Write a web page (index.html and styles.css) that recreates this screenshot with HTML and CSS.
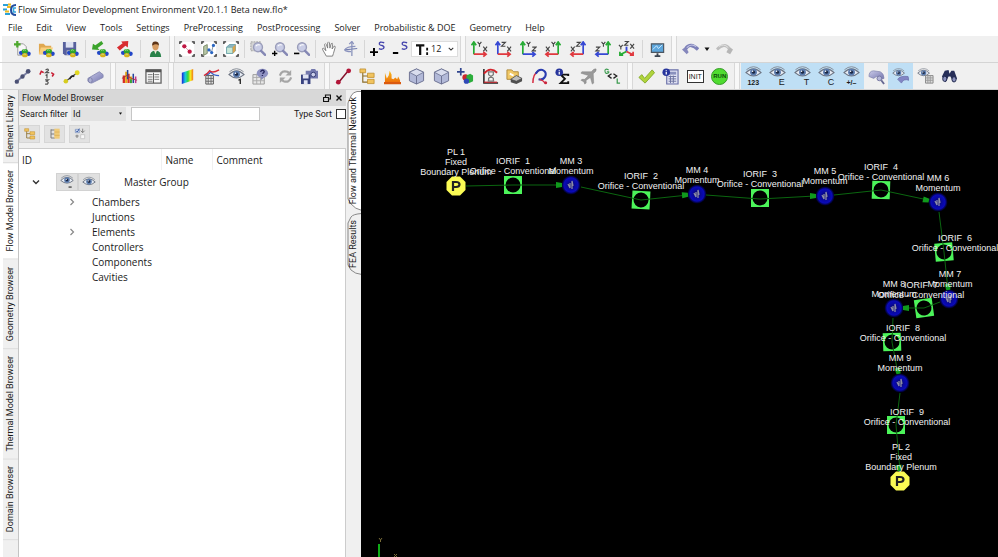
FILE: index.html
```html
<!DOCTYPE html>
<html lang="en">
<head>
<meta charset="utf-8">
<title>Flow Simulator Development Environment</title>
<link rel="stylesheet" href="styles.css">
</head>
<body>
<svg class="defs" aria-hidden="true">
  <defs>
    <linearGradient id="lilac" x1="0" y1="0" x2="1" y2="1"><stop offset="0" stop-color="#c9cae8"/><stop offset="1" stop-color="#7374ae"/></linearGradient>
    <linearGradient id="rainbow"><stop offset="0" stop-color="#1a20d8"/><stop offset=".3" stop-color="#18c8e0"/><stop offset=".55" stop-color="#38d838"/><stop offset=".75" stop-color="#f4ee20"/><stop offset="1" stop-color="#f07818"/></linearGradient>
    <linearGradient id="flame" x1="0" y1="0" x2="0" y2="1"><stop offset="0" stop-color="#f6c020"/><stop offset="1" stop-color="#ee6a08"/></linearGradient>
    <radialGradient id="orb"><stop offset="0" stop-color="#0a0a50"/><stop offset=".45" stop-color="#0808a0"/><stop offset=".75" stop-color="#0a0ab8"/><stop offset="1" stop-color="#000040" stop-opacity=".5"/></radialGradient>

    <g id="balls"><ellipse cx="8" cy="12.500" rx="2.800" ry="2.300" fill="#2246c8"/><ellipse cx="15" cy="13.500" rx="2.800" ry="2.300" fill="#2246c8"/><ellipse cx="11.500" cy="11" rx="3.300" ry="2.500" fill="#2fa52c"/><ellipse cx="11.500" cy="15" rx="3" ry="2.200" fill="#d8b21c"/><path d="M9.500 10q2-1.300 3 0M10 14.500q1.500-1 2.500 0" stroke="#b7f2a0" fill="none" stroke-width=".8"/></g>
    <g id="eye"><path d="M1 7Q9-1 17 7Q9 14 1 7Z" fill="#e8edf5" stroke="#6d7482" stroke-width="1.200"/><circle cx="9" cy="6.500" r="3.600" fill="#5c7cae"/><circle cx="9" cy="6.500" r="1.700" fill="#1c2844"/><circle cx="8" cy="5.500" r=".8" fill="#fff"/><path d="M1.500 4Q9-2.500 16.500 4" fill="none" stroke="#858b96"/></g>
    <g id="lens"><circle cx="9" cy="7" r="5" fill="#c9cde6" stroke="#9a9dba" stroke-width="1.600"/><path d="M6.500 6Q8 3.500 11 4.500" fill="none" stroke="#fff" stroke-width="1.200"/><path d="M12.500 11L17 15.500" stroke="#8588b4" stroke-width="2.800" stroke-linecap="round"/></g>
    <g id="corners" fill="none" stroke="#333" stroke-width="1.500"><path d="M1 3.500V1H3.500M14.500 1H17V3.500M17 14.500V17H14.500M3.500 17H1V14.500"/></g>
    <g id="cube"><path d="M9 1L16.500 4.500V13.500L9 17L1.500 13.500V4.500Z" fill="#b2b9d8" stroke="#6a7090"/><path d="M9 1L16.500 4.500L9 8.500L1.500 4.500Z" fill="#d9ddee" stroke="#656c8c" stroke-width=".8"/><path d="M9 8.500V17" stroke="#6a7090"/></g>
    <g id="tree"><path d="M4 4V15H10M4 8.500H10" fill="none" stroke="#8a6c28" stroke-width="1.200"/><path d="M1 1H7V5H1ZM9 5.500H16V10H9ZM9 12H16V16.500H9Z" fill="#f1c35e" stroke="#be8d2c" stroke-width=".8"/></g>
    <g id="info"><circle cx="4.500" cy="4.500" r="4" fill="#27359c"/><path d="M4.500 4V7M4.500 2V3" stroke="#fff" stroke-width="1.300"/></g>

    <symbol id="i-new" viewBox="0 0 18 18"><path d="M4 3H10L13 6V15H4Z" fill="#f7f7f7" stroke="#999"/><path d="M3.500 0V7M0 3.500H7" stroke="#4da82c" stroke-width="2.400"/><use href="#balls"/></symbol>
    <symbol id="i-open" viewBox="0 0 18 18"><path d="M1 3H6L8 5H14V14H1Z" fill="#e0a850"/><path d="M3 7H16L13 14H1Z" fill="#f9cf7c"/><use href="#balls"/></symbol>
    <symbol id="i-save" viewBox="0 0 18 18"><path d="M1 1H15V15H3L1 13Z" fill="#57609d"/><path d="M4 1H12V7H4Z" fill="#dde1f1"/><path d="M5 10H11V15H5Z" fill="#ccc"/><use href="#balls"/></symbol>
    <symbol id="i-import" viewBox="0 0 18 18"><path d="M0 9L1 3L3.500 4.500L10 0L12 3L6 7.500L8 9.500Z" fill="#3ca42c"/><use href="#balls"/></symbol>
    <symbol id="i-export" viewBox="0 0 18 18"><path d="M13 0L12.500 7L10 5L4 10L1 7L7 2.500L5.500 .5Z" fill="#d82d30"/><use href="#balls"/></symbol>
    <symbol id="i-user" viewBox="0 0 18 18"><path d="M3 17Q3 10 9 10Q15 10 15 17Z" fill="#29824a"/><path d="M7 9L9 14L11 9Z" fill="#f0e7d8"/><ellipse cx="9" cy="5.500" rx="3.300" ry="4.300" fill="#d69c62"/><path d="M5.500 5Q5 0 9.500 .5Q13 1 12.500 5Q10 2 5.500 5Z" fill="#5c3418"/></symbol>
    <symbol id="i-fit-nodes" viewBox="0 0 18 18"><path d="M1 1H17V17H1Z" fill="#fff"/><use href="#corners"/><path d="M6 6L12 12" stroke="#d89aa8"/><circle cx="6" cy="6" r="2.400" fill="#c01844"/><circle cx="12" cy="12" r="2.400" fill="#c01844"/></symbol>
    <symbol id="i-fit-parts" viewBox="0 0 18 18"><path d="M1 1H17V17H1Z" fill="#fff"/><use href="#corners"/><path d="M3 6L7 4V14L3 16Z" fill="#b9c8a8" stroke="#758561"/><path d="M9 10L12 12L14 4" fill="none" stroke="#789" stroke-width="1"/><circle cx="9" cy="10" r="1.800" fill="#2a66c2"/><circle cx="12" cy="13" r="1.800" fill="#2a66c2"/><circle cx="14" cy="5" r="1.800" fill="#2a66c2"/></symbol>
    <symbol id="i-fit-cube" viewBox="0 0 18 18"><path d="M1 1H17V17H1Z" fill="#fff"/><use href="#corners"/><path d="M4 7L7 4H14V11L11 14H4Z" fill="#8fb6c4" stroke="#68a0a8"/><path d="M4 7H11V14H4Z" fill="#c8e8d8" stroke="#68a0a8" stroke-width=".8"/><path d="M11 7L14 4V11L11 14Z" fill="#dba34b"/></symbol>
    <symbol id="i-zoom-box" viewBox="0 0 18 18"><path d="M1 1H12V11H1Z" fill="#d4d4d4" stroke="#999" stroke-dasharray="2 1"/><use href="#lens"/></symbol>
    <symbol id="i-zoom-in" viewBox="0 0 18 18"><use href="#lens"/><path d="M3 11V17M0 14H6" stroke="#000" stroke-width="1.600"/></symbol>
    <symbol id="i-zoom-out" viewBox="0 0 18 18"><use href="#lens"/><path d="M0 14H6" stroke="#000" stroke-width="1.800"/></symbol>
    <symbol id="i-hand" viewBox="0 0 18 18"><path d="M6 17L2 10Q1 8 3 8L5.500 11L4 4Q5 2 6 4L7.500 8L7.500 2Q8.500 0 9.500 2L10 8L11.500 3Q13 1.500 13 4L12.500 9L14.500 6Q16 5 16 7L14 14L13 17Z" fill="#fff" stroke="#777"/></symbol>
    <symbol id="i-rotate" viewBox="0 0 18 18"><path d="M10 1V17M2 10L16 8.500" stroke="#7580b0" stroke-width="1.200"/><path d="M14 6Q4 6 2 10Q3 12 9 12M7 3.500L10 .5L12 3.500" fill="none" stroke="#8a92bd" stroke-width="1.400"/></symbol>
    <symbol id="i-size-up" viewBox="0 0 18 18"><path d="M4.500 8V17M0 12.500H9" stroke="#000" stroke-width="2.200"/><path d="M16 2Q10 0 10.500 3.500Q11 5 13.500 5Q17 6 15 8.500Q13 10 10 8.500" fill="none" stroke="#4545ad" stroke-width="1.600"/></symbol>
    <symbol id="i-size-down" viewBox="0 0 18 18"><path d="M1 13.500H7" stroke="#000" stroke-width="2.200"/><path d="M17 2Q11 0 11.500 3.500Q12 5 14.500 5Q18 6 16 8.500Q14 10 11 8.500" fill="none" stroke="#4545ad" stroke-width="1.600"/></symbol>
    <symbol id="i-text" viewBox="0 0 14 14"><path d="M0 2.500H9M4.500 2.500V13" stroke="#111" stroke-width="2.400"/><path d="M12 5V8M12 10V13" stroke="#111" stroke-width="2"/></symbol>

    <g id="frame-right"><path d="M3 14V2M.500 4.500L3 1L5.500 4.500" fill="none" stroke="currentColor" stroke-width="1.800"/></g>
    <g id="letter-x"><path d="M0 0L4 5M4 0L0 5" stroke="#444" stroke-width="1.200"/></g>
    <g id="letter-y"><path d="M0 0L2 2.500L4 0M2 2.500V5" stroke="#444" stroke-width="1.200" fill="none"/></g>
    <g id="letter-z"><path d="M0 .5H4L0 4.500H4" stroke="#444" stroke-width="1.200" fill="none"/></g>
    <g id="arrow-e"><path d="M3 14H15M13 11.500L16 14L13 16.500" fill="none" stroke="currentColor" stroke-width="1.800"/></g>
    <g id="frame-left"><path d="M15 14V2M12.500 4.500L15 1L17.500 4.500" fill="none" stroke="currentColor" stroke-width="1.800"/></g>
    <g id="arrow-w"><path d="M15 14H3M5 11.500L2 14L5 16.500" fill="none" stroke="currentColor" stroke-width="1.800"/></g>
    <symbol id="i-yx" viewBox="0 0 18 18"><use href="#frame-right" color="#26ab35"/><use href="#arrow-e" color="#e0383e"/><use href="#letter-y" x="7" y="1"/><use href="#letter-x" x="13" y="6"/></symbol>
    <symbol id="i-zx" viewBox="0 0 18 18"><use href="#frame-right" color="#3648d4"/><use href="#arrow-e" color="#e0383e"/><use href="#letter-z" x="7" y="1"/><use href="#letter-x" x="13" y="6"/></symbol>
    <symbol id="i-yz" viewBox="0 0 18 18"><use href="#frame-right" color="#26ab35"/><use href="#arrow-e" color="#3648d4"/><use href="#letter-y" x="7" y="1"/><use href="#letter-z" x="13" y="6"/></symbol>
    <symbol id="i-xy" viewBox="0 0 18 18"><use href="#frame-left" color="#26ab35"/><use href="#arrow-w" color="#e0383e"/><use href="#letter-y" x="8" y="1"/><use href="#letter-x" x="2" y="6"/></symbol>
    <symbol id="i-xz" viewBox="0 0 18 18"><use href="#frame-left" color="#3648d4"/><use href="#arrow-w" color="#e0383e"/><use href="#letter-z" x="8" y="1"/><use href="#letter-x" x="2" y="6"/></symbol>
    <symbol id="i-zy" viewBox="0 0 18 18"><use href="#frame-left" color="#26ab35"/><use href="#arrow-w" color="#3648d4"/><use href="#letter-y" x="8" y="1"/><use href="#letter-z" x="2" y="6"/></symbol>
    <symbol id="i-iso" viewBox="0 0 18 18"><path d="M9 11V6" stroke="#3648d4" stroke-width="2"/><path d="M9 11L2 14.500M2 11.500V15H5.500" stroke="#26ab35" stroke-width="1.800" fill="none"/><path d="M9 11L16 14.500M16 11.500V15H12.500" stroke="#e0383e" stroke-width="1.800" fill="none"/><use href="#letter-y" x="1" y="4"/><use href="#letter-z" x="7" y="0"/><use href="#letter-x" x="13" y="3"/></symbol>
    <symbol id="i-monitor" viewBox="0 0 18 18"><path d="M2.500 3H15.500V12H2.500Z" fill="#5ca6dc" stroke="#4b5560" stroke-width="1.200"/><path d="M4 9L8 5L10 8L14 4" stroke="#cdeaff" fill="none"/><path d="M9 13V15M6 16H12" stroke="#3b4450" stroke-width="2"/></symbol>
    <symbol id="i-undo" viewBox="0 0 18 18"><path d="M0 9L4 6L7 12L5 14Z" fill="#8587bc"/><path d="M4 8Q9 1 17 9" fill="none" stroke="#7d80b8" stroke-width="3.500"/><path d="M5 7Q10 2 15 6" fill="none" stroke="#c5c7e6" stroke-width="1.200"/></symbol>
    <symbol id="i-redo" viewBox="0 0 18 18"><path d="M18 9L14 6L11 12L15 14Z" fill="#b6b6b6"/><path d="M14 8Q9 1 1 9" fill="none" stroke="#bdbdbd" stroke-width="3"/><path d="M13 7Q8 2 3 6" fill="none" stroke="#e6e6e6"/></symbol>
    <symbol id="i-caret" viewBox="0 0 8 8"><path d="M1.500 2.500H6.500L4 6Z" fill="#111"/></symbol>

    <symbol id="i-chain" viewBox="0 0 18 18"><path d="M3 14L9 9L15 4" stroke="#7c81a4" stroke-width="2"/><g fill="#4b5174"><circle cx="3" cy="14.500" r="2.300"/><circle cx="9" cy="9" r="2.300"/><circle cx="15" cy="3.500" r="2.500"/></g></symbol>
    <symbol id="i-renumber" viewBox="0 0 18 18"><g fill="none" stroke="#555" stroke-width="1.300"><path d="M8 2Q11 0 11 2.500L8 5H12M8 8L9.500 7V11M7.500 12.500H11L9 14Q12 15 10 17H7.500"/></g><path d="M2 7L3.500 3.500L6 5M14 5L16.500 6.500L15 9" stroke="#c81c32" stroke-width="1.600" fill="none"/></symbol>
    <symbol id="i-link" viewBox="0 0 18 18"><path d="M3 14L15 5" stroke="#444" stroke-width="1.200"/><circle cx="3" cy="14" r="2.400" fill="#d6cc20"/><circle cx="15" cy="5" r="2.600" fill="#e2d820"/><path d="M7 12Q9 7 12 9" stroke="#222" stroke-width="1.600" fill="none"/></symbol>
    <symbol id="i-pipe" viewBox="0 0 18 18"><path d="M1 11L13 4L17 7V10L5 16L1 14Z" fill="url(#lilac)" stroke="#888bb5"/><ellipse cx="3.500" cy="13" rx="2" ry="2.800" fill="#aeb1d4" stroke="#7d80a9"/></symbol>
    <symbol id="i-bars" viewBox="0 0 18 18"><path d="M3 16V8M8 16V6" stroke="#d82c25" stroke-width="2.400"/><path d="M5.500 16V4M10.500 16V9" stroke="#e8a818" stroke-width="2.200"/><path d="M7 12V2M13 16V6" stroke="#24439c" stroke-width="1.600"/><path d="M1 11L6 8L11 11L17 13" stroke="#a33" fill="none"/><path d="M10.500 16V12" stroke="#32a43b" stroke-width="2"/><path d="M15.500 16V9" stroke="#c2378a" stroke-width="1.600"/></symbol>
    <symbol id="i-sheet" viewBox="0 0 18 18"><path d="M1 2H17V16H1Z" fill="#f7f7f7" stroke="#666" stroke-width="1.400"/><path d="M1 3H17" stroke="#555" stroke-width="3"/><path d="M3 7H8M3 9.500H8M3 12H8M3 14H8M10 7H15M10 9.500H15M10 12H15" stroke="#777"/><path d="M9 5V16" stroke="#555"/></symbol>
    <symbol id="i-contour" viewBox="0 0 18 18"><path d="M3 5L15 1V13L3 17Z" fill="url(#rainbow)"/></symbol>
    <symbol id="i-plot" viewBox="0 0 18 18"><path d="M3 6Q6 8 8 4Q11 8 17 8" fill="none" stroke="#345bc6" stroke-width="1.300"/><path d="M1 8Q5 6 7 3Q10 6 17 2" fill="none" stroke="#d62836" stroke-width="1.600"/><path d="M3 8H11V17H3Z" fill="#eee" stroke="#555"/><path d="M3 11H11M3 14H11M5.500 8V17M8.500 8V17" stroke="#666"/></symbol>
    <symbol id="i-eye-one" viewBox="0 0 18 18"><use href="#eye"/><path d="M11 13L13 12V17" fill="none" stroke="#222" stroke-width="1.400"/></symbol>
    <symbol id="i-query" viewBox="0 0 18 18"><path d="M1 7H13V17H1Z" fill="#e8e8e8" stroke="#999"/><path d="M1 10H13M1 13.500H13M5 7V17M9 7V17" stroke="#aaa"/><path d="M9 8H14L10 13Z" fill="#8385ae"/><ellipse cx="11" cy="5.500" rx="6" ry="4.800" fill="#8f92c2"/><path d="M9 4Q11 1 13 3.500Q13 5 11 6M11 7.500V8.500" stroke="#27275e" stroke-width="1.400" fill="none"/></symbol>
    <symbol id="i-refresh" viewBox="0 0 18 18"><path d="M3 8Q5 2 11 4L14 6M15 10Q13 16 7 14L4 12" fill="none" stroke="#a6a6a6" stroke-width="2.300"/><path d="M15 2V8H9ZM3 16V10H9Z" fill="#a6a6a6"/></symbol>
    <symbol id="i-save-view" viewBox="0 0 18 18"><path d="M5 3H10L11 1H15L16 3H18V11H5Z" fill="#7479ae"/><circle cx="13" cy="7" r="2.500" fill="#ccd0ea" stroke="#343b72"/><path d="M0 7H10V17H0Z" fill="#38427f"/><path d="M2 7H8V11H2ZM3 13H7V17H3Z" fill="#e1e4f3"/></symbol>
    <symbol id="i-line" viewBox="0 0 18 18"><path d="M4 15L14 3" stroke="#85112c" stroke-width="1.600"/><circle cx="3.500" cy="15" r="2.500" fill="#b21638"/><circle cx="14.500" cy="3" r="2.500" fill="#b21638"/></symbol>
    <symbol id="i-tree" viewBox="0 0 18 18"><use href="#tree"/></symbol>
    <symbol id="i-flame" viewBox="0 0 18 18"><path d="M1 16V5L3 11L5 8L6 3L8 7V11L10 12L12 10L14 12L15 9L17 13V16Z" fill="url(#flame)"/><path d="M0 16H18" stroke="#da5a10" stroke-width="2.400"/></symbol>
    <symbol id="i-cube" viewBox="0 0 18 18"><use href="#cube"/></symbol>
    <symbol id="i-shapes" viewBox="0 0 18 18"><path d="M4 0V8M0 4H8" stroke="#30458f" stroke-width="1.800"/><circle cx="9" cy="10" r="3.300" fill="#c9282d"/><path d="M10 8L14 6L17 8V14L13 16L10 14Z" fill="#2cae3c"/><circle cx="10" cy="14" r="2.800" fill="#3049b7"/></symbol>
    <symbol id="i-transient" viewBox="0 0 18 18"><path d="M2 1V16H17" fill="none" stroke="#222" stroke-width="1.600"/><path d="M2 6Q9-2 16 5" fill="none" stroke="#d3242c" stroke-width="2"/><path d="M2 15H16" stroke="#d3242c" stroke-width="1.200"/><path d="M6 4H13M6 14H13M7 4V7L12 11V14M12 4V7L7 11V14" fill="none" stroke="#777" stroke-width="1.300"/></symbol>
    <symbol id="i-database" viewBox="0 0 18 18"><path d="M1 2H6L8 4H13V12H1Z" fill="#f0c866" stroke="#b08938"/><path d="M4 6L8 8" stroke="#fff" stroke-width="2"/><path d="M5 12L11 8L17 11V14L11 17L5 15Z" fill="#505050"/><path d="M5 12L11 8L17 11L11 14Z" fill="#bdbdbd" stroke="#444" stroke-width=".7"/></symbol>
    <symbol id="i-curve" viewBox="0 0 18 18"><path d="M2 16Q2 6 8 3" fill="none" stroke="#d52c42" stroke-width="1.600"/><path d="M5 6Q8 1 12 2Q17 4 15 9Q13 13 8 12" fill="none" stroke="#2a3cb0" stroke-width="2.200"/><path d="M9 12Q13 13 15 16" fill="none" stroke="#d52c42" stroke-width="1.400"/><circle cx="15.500" cy="15.500" r="1.600" fill="#c9253c"/></symbol>
    <symbol id="i-sum" viewBox="0 0 18 18"><path d="M14 8.500V7H6L10.500 11.500L6 16H14V14" fill="none" stroke="#111" stroke-width="2"/><use href="#info"/></symbol>
    <symbol id="i-plane" viewBox="0 0 18 18"><path d="M17 1Q15 0 12 4L2 4L1 5.500L9 8L5 12L2 12L1 13L4 14.500L5 17L6.500 16V13L11 10L13 17L14.500 16L14 6Q18 3 17 1Z" fill="#999" stroke="#808080" stroke-width=".5"/></symbol>
    <symbol id="i-gl" viewBox="0 0 18 18"><path d="M5 2Q1 0 1 3Q1 7 5 5V4H3" fill="none" stroke="#3b9a4e" stroke-width="1.200"/><path d="M8 6L4.500 8.500L8 11M10 6L13.500 8.500L10 11" fill="none" stroke="#222" stroke-width="1.400"/><path d="M14 11V16H17" fill="none" stroke="#3b9a4e" stroke-width="1.300"/></symbol>
    <symbol id="i-check" viewBox="0 0 18 18"><path d="M1 10L4 7L7 11L15 2L17.500 5L7.500 16Z" fill="#b0d43c" stroke="#85aa28"/></symbol>
    <symbol id="i-calc" viewBox="0 0 18 18"><path d="M5 2H17V17H5Z" fill="#dfe1f2" stroke="#6a70a8" stroke-width="1.200"/><path d="M7 4H15V7H7Z" fill="#8a91bd"/><path d="M7 9H15M7 11.500H15M7 14H15M9 8V16M12 8V16" stroke="#6c739f"/><use href="#info"/></symbol>
    <symbol id="i-surface" viewBox="0 0 18 18"><path d="M1 9Q1 3 6 3L13 4Q17 6 17 11L14 12L9 9L6 11Z" fill="url(#lilac)" stroke="#8184ad" stroke-width=".7"/><circle cx="12" cy="11" r="2.500" fill="#b5b7d9" stroke="#73759f"/><path d="M14 13L17 17" stroke="#666892" stroke-width="2"/></symbol>
    <symbol id="i-eye-surface" viewBox="0 0 18 18"><svg width="14" height="14" viewBox="0 0 18 18"><use href="#eye"/></svg><path d="M6 12Q8 8 17 9L18 13Q12 11 10 16Z" fill="#8285c4" stroke="#696ca8" stroke-width=".7"/></symbol>
    <symbol id="i-eye-grid" viewBox="0 0 18 18"><svg width="14" height="14" viewBox="0 0 18 18"><use href="#eye"/></svg><path d="M9 8H17V16H9Z" fill="#ddd" stroke="#888"/><path d="M9 10.500H17M9 13H17M11.500 8V16M14 8V16" stroke="#999"/></symbol>
    <symbol id="i-binoculars" viewBox="0 0 18 18"><path d="M1 9L4 3L8 2L9 6L11 3L14 3L17 11L13 15L10 9L8 9L5 15Z" fill="#262e58"/><ellipse cx="4" cy="11.500" rx="2.200" ry="2.800" fill="#8b91bd" stroke="#20284c"/><ellipse cx="13.800" cy="12" rx="2.200" ry="2.800" fill="#8b91bd" stroke="#20284c"/></symbol>
    <symbol id="i-eye" viewBox="0 -2 18 18"><use href="#eye"/></symbol>
    <symbol id="i-eye-top" viewBox="0 0 18 18"><use href="#eye"/></symbol>
    <symbol id="i-eye-minus" viewBox="0 0 18 18"><use href="#eye"/><path d="M11 15.500H15" stroke="#222" stroke-width="1.400"/></symbol>
    <symbol id="i-list" viewBox="0 0 18 18"><path d="M3 2V15M3 3H9M3 15H9M3 9H9" stroke="#777" fill="none" stroke-width="1.400"/><path d="M8 1H16V16H8Z" fill="#f0cb78"/><path d="M8 6H16M8 11H16" stroke="#d9a94a"/></symbol>
    <symbol id="i-checks" viewBox="0 0 18 18"><path d="M2 2H8V7H2Z" fill="#dfe7f5" stroke="#6f88b8"/><path d="M3 4L5 6L8 1" stroke="#2950a0" stroke-width="1.400" fill="none"/><path d="M13 1V7M10 4L13 7L16 4M2 12H7M4.500 10V15" stroke="#777" stroke-width="1.300" fill="none"/><path d="M10 10H16V16H10Z" fill="#f8f8f8" stroke="#bbb"/></symbol>
    <symbol id="i-logo" viewBox="0 0 14 14"><path d="M0 2H5M0 6.500H4M2 11H7" stroke="#2ba1d8" stroke-width="2"/><path d="M4 4H8M2 8.500H6M5 1.500H8" stroke="#eebc22" stroke-width="1.800"/><path d="M13 2Q8 2 8 7Q8 12 13 12" fill="none" stroke="#234ea0" stroke-width="2"/><path d="M13 5H10.500V9H13" fill="none" stroke="#35a5dc" stroke-width="1.600"/></symbol>
    <symbol id="i-open-chevron" viewBox="0 0 8 8"><path d="M1 2.500L4 5.500L7 2.500" fill="none" stroke="#333" stroke-width="1.400"/></symbol>
    <symbol id="i-closed-chevron" viewBox="0 0 8 8"><path d="M2.500 1L5.500 4L2.500 7" fill="none" stroke="#888" stroke-width="1.200"/></symbol>
    <symbol id="i-float" viewBox="0 0 8 8"><path d="M2.500 3V1H7.500V5H5.500M.5 3.500H5.500V7.500H.5Z" fill="none" stroke="#111" stroke-width="1.200"/></symbol>
    <symbol id="i-close" viewBox="0 0 8 8"><path d="M1.500 1.500L6.500 6.500M6.500 1.500L1.500 6.500" stroke="#111" stroke-width="1.400"/></symbol>
  </defs>
</svg>

<header class="titlebar"><svg class="logo"><use href="#i-logo"/></svg><h1>Flow Simulator Development Environment V20.1.1 Beta new.flo*</h1></header>

<nav class="menubar" aria-label="Main menu">
  <button>File</button><button>Edit</button><button>View</button><button>Tools</button><button>Settings</button><button>PreProcessing</button><button>PostProcessing</button><button>Solver</button><button>Probabilistic &amp; DOE</button><button>Geometry</button><button>Help</button>
</nav>

<div class="toolrow">
  <div class="toolbar" role="toolbar" aria-label="File">
    <div class="group n3"><button aria-label="New"><svg><use href="#i-new"/></svg></button><button aria-label="Open"><svg><use href="#i-open"/></svg></button><button aria-label="Save"><svg><use href="#i-save"/></svg></button></div>
    <div class="group n2 divided"><button aria-label="Import"><svg><use href="#i-import"/></svg></button><button aria-label="Export"><svg><use href="#i-export"/></svg></button></div>
    <div class="group n1 divided"><button aria-label="User"><svg><use href="#i-user"/></svg></button></div>
  </div>
  <div class="toolbar tight" role="toolbar" aria-label="Navigation">
    <div class="group n3"><button aria-label="Fit nodes"><svg><use href="#i-fit-nodes"/></svg></button><button aria-label="Fit parts"><svg><use href="#i-fit-parts"/></svg></button><button aria-label="Fit geometry"><svg><use href="#i-fit-cube"/></svg></button></div>
    <div class="group n3 divided"><button aria-label="Zoom to box"><svg><use href="#i-zoom-box"/></svg></button><button aria-label="Zoom in"><svg><use href="#i-zoom-in"/></svg></button><button aria-label="Zoom out"><svg><use href="#i-zoom-out"/></svg></button></div>
    <div class="group n2 divided"><button aria-label="Pan"><svg><use href="#i-hand"/></svg></button><button aria-label="Rotate"><svg><use href="#i-rotate"/></svg></button></div>
    <div class="group n2 divided"><button aria-label="Larger symbols"><svg><use href="#i-size-up"/></svg></button><button aria-label="Smaller symbols"><svg><use href="#i-size-down"/></svg></button></div>
    <label class="fontsize"><svg class="t"><use href="#i-text"/></svg><select aria-label="Text size"><option>12</option></select><svg class="chev"><use href="#i-open-chevron"/></svg></label>
  </div>
  <div class="toolbar" role="toolbar" aria-label="Views">
    <div class="group n7"><button aria-label="Y X view"><svg><use href="#i-yx"/></svg></button><button aria-label="Z X view"><svg><use href="#i-zx"/></svg></button><button aria-label="Y Z view"><svg><use href="#i-yz"/></svg></button><button aria-label="X Y view"><svg><use href="#i-xy"/></svg></button><button aria-label="X Z view"><svg><use href="#i-xz"/></svg></button><button aria-label="Z Y view"><svg><use href="#i-zy"/></svg></button><button aria-label="Isometric view"><svg><use href="#i-iso"/></svg></button></div>
    <div class="group n1 divided"><button aria-label="Display"><svg><use href="#i-monitor"/></svg></button></div>
  </div>
  <div class="toolbar" role="toolbar" aria-label="History">
    <div class="group n1"><button aria-label="Undo"><svg><use href="#i-undo"/></svg></button></div>
    <button class="caret" aria-label="Undo list"><svg><use href="#i-caret"/></svg></button>
    <div class="group n1"><button aria-label="Redo"><svg><use href="#i-redo"/></svg></button></div>
  </div>
</div>

<div class="toolrow">
  <div class="toolbar" role="toolbar" aria-label="Network"><div class="group n4"><button aria-label="Chain"><svg><use href="#i-chain"/></svg></button><button aria-label="Renumber"><svg><use href="#i-renumber"/></svg></button><button aria-label="Link"><svg><use href="#i-link"/></svg></button><button aria-label="Pipe"><svg><use href="#i-pipe"/></svg></button></div></div>
  <div class="toolbar" role="toolbar" aria-label="Tables"><div class="group n2"><button aria-label="Charts"><svg><use href="#i-bars"/></svg></button><button aria-label="Table"><svg><use href="#i-sheet"/></svg></button></div></div>
  <div class="toolbar" role="toolbar" aria-label="Results"><div class="group n6"><button aria-label="Contours"><svg><use href="#i-contour"/></svg></button><button aria-label="Plot"><svg><use href="#i-plot"/></svg></button><button aria-label="Show result"><svg><use href="#i-eye-one"/></svg></button><button aria-label="Query"><svg><use href="#i-query"/></svg></button><button aria-label="Refresh"><svg><use href="#i-refresh"/></svg></button><button aria-label="Save view"><svg><use href="#i-save-view"/></svg></button></div></div>
  <div class="toolbar" role="toolbar" aria-label="Model"><div class="group n12"><button aria-label="Line"><svg><use href="#i-line"/></svg></button><button aria-label="Tree"><svg><use href="#i-tree"/></svg></button><button aria-label="Combustion"><svg><use href="#i-flame"/></svg></button><button aria-label="Solid"><svg><use href="#i-cube"/></svg></button><button aria-label="Volume"><svg><use href="#i-cube"/></svg></button><button aria-label="Add shapes"><svg><use href="#i-shapes"/></svg></button><button aria-label="Transient"><svg><use href="#i-transient"/></svg></button><button aria-label="Database"><svg><use href="#i-database"/></svg></button><button aria-label="Curve"><svg><use href="#i-curve"/></svg></button><button aria-label="Sum"><svg><use href="#i-sum"/></svg></button><button aria-label="Mission"><svg><use href="#i-plane"/></svg></button><button aria-label="Global to local"><svg><use href="#i-gl"/></svg></button></div></div>
  <div class="toolbar" role="toolbar" aria-label="Run"><div class="group n4"><button aria-label="Check"><svg><use href="#i-check"/></svg></button><button aria-label="Calculator"><svg><use href="#i-calc"/></svg></button><button><span class="init">INIT</span></button><button><span class="run">RUN</span></button></div></div>
  <div class="toolbar" role="toolbar" aria-label="Visibility"><div class="group n9"><button class="on eye"><svg><use href="#i-eye-top"/></svg><span>123</span></button><button class="on eye letter"><svg><use href="#i-eye-top"/></svg><span>E</span></button><button class="on eye letter"><svg><use href="#i-eye-top"/></svg><span>T</span></button><button class="on eye letter"><svg><use href="#i-eye-top"/></svg><span>C</span></button><button class="on eye"><svg><use href="#i-eye-top"/></svg><span>+/&#8211;</span></button><button aria-label="Pick surface"><svg><use href="#i-surface"/></svg></button><button class="on" aria-label="Show surface"><svg><use href="#i-eye-surface"/></svg></button><button aria-label="Show grid"><svg><use href="#i-eye-grid"/></svg></button><button aria-label="Find"><svg><use href="#i-binoculars"/></svg></button></div></div>
</div>

<main class="workspace">
  <nav class="sidetabs" aria-label="Browsers">
    <button>Element Library</button><button class="active">Flow Model Browser</button><button>Geometry Browser</button><button>Thermal Model Browser</button><button>Domain Browser</button>
  </nav>
  <section class="dock">
    <header class="docktitle"><h2>Flow Model Browser</h2><button aria-label="Float"><svg><use href="#i-float"/></svg></button><button aria-label="Close"><svg><use href="#i-close"/></svg></button></header>
    <div class="filter">
      <label for="field">Search filter</label>
      <span class="pick"><select id="field"><option>Id</option></select><svg><use href="#i-caret"/></svg></span>
      <input type="text" aria-label="Search text">
      <label class="sort">Type Sort <input type="checkbox"></label>
    </div>
    <div class="treetools"><button aria-label="Expand tree"><svg><use href="#i-tree"/></svg></button><button aria-label="Collapse tree"><svg><use href="#i-list"/></svg></button><button aria-label="Select items"><svg><use href="#i-checks"/></svg></button></div>
    <div class="treebox">
      <table>
        <thead><tr><th class="c-id">ID</th><th class="c-name">Name</th><th>Comment</th></tr></thead>
        <tbody>
          <tr class="master"><td colspan="3"><div><button class="twist" aria-label="Collapse"><svg><use href="#i-open-chevron"/></svg></button><button class="vis" aria-label="Hide"><svg><use href="#i-eye-minus"/></svg></button><button class="vis" aria-label="Show"><svg><use href="#i-eye"/></svg></button><span>Master Group</span></div></td></tr>
          <tr><td colspan="3"><div><button class="twist" aria-label="Expand"><svg><use href="#i-closed-chevron"/></svg></button>Chambers</div></td></tr>
          <tr><td colspan="3"><div>Junctions</div></td></tr>
          <tr><td colspan="3"><div><button class="twist" aria-label="Expand"><svg><use href="#i-closed-chevron"/></svg></button>Elements</div></td></tr>
          <tr><td colspan="3"><div>Controllers</div></td></tr>
          <tr><td colspan="3"><div>Components</div></td></tr>
          <tr><td colspan="3"><div>Cavities</div></td></tr>
        </tbody>
      </table>
    </div>
  </section>
  <nav class="viewtabs" aria-label="Views">
    <button class="active"><svg viewBox="0 0 15 120" preserveAspectRatio="none"><path d="M16 .5H11Q7 1 5 5L2 12V108L5 113Q9 118 16 119.500"/></svg><span>Flow and Thermal Network</span></button>
    <button><svg viewBox="0 0 15 62" preserveAspectRatio="none"><path d="M16 .5Q7 1 5 4L2 10V52L5 57Q9 61 16 61.500"/></svg><span>FEA Results</span></button>
  </nav>
  <section class="canvas" aria-label="Flow and Thermal Network">
    <svg viewBox="361 90 637 467" preserveAspectRatio="xMinYMin slice">
      <defs>
        <g id="orifice"><path d="M-9-9H9V9H-9Z" fill="#4cf45a"/><circle r="7.500" fill="#000"/></g>
        <g id="plenum"><path d="M-4-9.500H4L9.500-4V4L4 9.500H-4L-9.500 4V-4Z" fill="#fbfb54"/><path d="M-3 5V-4H0Q3.500-4 3.500-1.500T0 1H-3" fill="none" stroke="#222" stroke-width="2.200"/></g>
        <g id="momentum"><circle r="9.500" fill="url(#orb)"/><path d="M-3-1L-1 3V-2M1 4V-4L2 1" stroke="#8c8ca8" stroke-width="1.300" fill="none"/></g>
        <path id="tip" d="M-3-3L3-2V2L-3 3Z" fill="#109a1c"/>
      </defs>
      <use href="#orifice" x="513" y="185"/><use href="#orifice" transform="translate(641 200) rotate(3)"/><use href="#orifice" x="760" y="198"/><use href="#orifice" transform="translate(881 190) rotate(2)"/><use href="#orifice" transform="translate(944 252) rotate(-5)"/><use href="#orifice" transform="translate(924 308) rotate(-8)"/><use href="#orifice" transform="translate(892 342) rotate(-2)"/><use href="#orifice" x="896" y="425"/>
      <use href="#momentum" x="571" y="185"/><use href="#momentum" x="697" y="194"/><use href="#momentum" x="825" y="196"/><use href="#momentum" x="938" y="202"/><use href="#momentum" x="949" y="299"/><use href="#momentum" x="894" y="308"/><use href="#momentum" x="900" y="383"/>
      <path class="links" d="M466 186L513 185H562M581 187L641 200L688 195M706 195L760 199L815 196M834 195L881 190L928 200M939 212L944 252L948 290M940 302L924 308H903M893 318L892 342L898 374M900 393L896 425L900 471"/>
      <use href="#tip" x="559" y="185"/><use href="#tip" transform="translate(685 195) rotate(-5)"/><use href="#tip" x="813" y="196"/><use href="#tip" transform="translate(926 200) rotate(12)"/><use href="#tip" transform="translate(948 287) rotate(85)"/><use href="#tip" transform="translate(906 308) rotate(180)"/><use href="#tip" transform="translate(898 371) rotate(80)"/><use href="#tip" transform="translate(899 468) rotate(80)"/>
      <use href="#plenum" x="456" y="186"/><use href="#plenum" x="900" y="481"/>
      <g class="labels">
        <text x="456" y="155">PL 1</text><text x="456" y="165">Fixed</text><text x="456" y="175">Boundary Plenum</text>
        <text x="513" y="164">IORIF&#160; 1</text><text x="513" y="174">Orifice - Conventional</text>
        <text x="571" y="164">MM 3</text><text x="571" y="174">Momentum</text>
        <text x="641" y="179">IORIF&#160; 2</text><text x="641" y="189">Orifice - Conventional</text>
        <text x="697" y="173">MM 4</text><text x="697" y="183">Momentum</text>
        <text x="760" y="177">IORIF&#160; 3</text><text x="760" y="187">Orifice - Conventional</text>
        <text x="825" y="174">MM 5</text><text x="825" y="184">Momentum</text>
        <text x="881" y="170">IORIF&#160; 4</text><text x="881" y="180">Orifice - Conventional</text>
        <text x="938" y="181">MM 6</text><text x="938" y="191">Momentum</text>
        <text x="955" y="241">IORIF&#160; 6</text><text x="955" y="251">Orifice - Conventional</text>
        <text x="950" y="277">MM 7</text><text x="950" y="287">Momentum</text>
        <text x="921" y="288">IORIF&#160; 7</text><text x="921" y="298">Orifice - Conventional</text>
        <text x="894" y="287">MM 8</text><text x="894" y="297">Momentum</text>
        <text x="903" y="331">IORIF&#160; 8</text><text x="903" y="341">Orifice - Conventional</text>
        <text x="900" y="361">MM 9</text><text x="900" y="371">Momentum</text>
        <text x="907" y="415">IORIF&#160; 9</text><text x="907" y="425">Orifice - Conventional</text>
        <text x="901" y="450">PL 2</text><text x="901" y="460">Fixed</text><text x="901" y="470">Boundary Plenum</text>
      </g>
      <path d="M379 544V557" stroke="#12d81c" stroke-width="1.600"/>
      <path d="M379 538L380.500 540L382 538M380.500 540V542M394 554L397 557M397 554L394 557" fill="none" stroke="#786c38"/>
    </svg>
  </section>
</main>
</body>
</html>
```
FILE: styles.css
```css
* { box-sizing: border-box; }
html, body { height: 100%; }
body {
  margin: 0;
  display: flex;
  flex-direction: column;
  overflow: hidden;
  background: #fff;
  color: #1a1a1a;
  font: 10px/14px "Open Sans", "Noto Sans", sans-serif;
}
h1, h2 { margin: 0; font: inherit; }
button { margin: 0; padding: 0; border: 0; background: none; color: inherit; font: inherit; }
select, input { margin: 0; color: inherit; font: inherit; }
svg { display: block; }
.defs { position: absolute; width: 0; height: 0; }

.titlebar { display: flex; align-items: center; gap: 1px; height: 20px; padding-left: 3px; font-size: 9px; }
.logo { width: 14px; height: 14px; }

.menubar { display: flex; gap: 14px; height: 16px; padding-left: 8px; font-size: 9px; }

.toolrow { display: flex; gap: 9px; height: 27px; padding-left: 10px; background: #f0f0f0; border-bottom: 1px solid #d4d4d4; box-shadow: inset 2px 0 #fff; }
.toolbar { position: relative; display: flex; align-items: stretch; }
.toolbar + .toolbar::before { content: ""; position: absolute; left: -7px; top: 0; bottom: 0; width: 4px; border: solid #d8d8d8; border-width: 0 1px; background: #f8f8f8; }
.group { display: grid; grid-auto-flow: column; grid-auto-columns: 1fr; }
.group button { display: grid; place-items: center; }
.group svg { width: 17px; height: 17px; }
.divided { position: relative; margin-left: 6px; }
.tight .divided { margin-left: 5px; }
.divided::before { content: ""; position: absolute; left: -3px; top: 4px; bottom: 4px; width: 1px; background: #d6d6d6; }
.n1 { width: 24px; }
.n2 { width: 49px; }
.n3 { width: 72px; }
.n4 { width: 98px; }
.n6 { width: 147px; }
.n7 { width: 172px; }
.n9 { width: 221px; }
.n12 { width: 294px; }
.tight .n2 { width: 44px; }
.tight .n3 { width: 66px; }
.tight .group svg { width: 16px; height: 16px; }
.caret { width: 10px; }
.caret svg { width: 8px; height: 8px; margin: 0 auto; }

.fontsize { position: relative; display: flex; align-items: center; width: 47px; margin: 5px 0; padding-left: 4px; background: #fff; border: 1px solid #ddd; }
.fontsize .t { width: 13px; height: 13px; }
.fontsize select { flex: 1; width: 0; padding: 0 0 0 2px; border: 0; background: none; appearance: none; font-size: 9px; }
.fontsize .chev { position: absolute; right: 3px; top: 4px; width: 6px; height: 6px; pointer-events: none; }

.init { border: 1px solid #333; background: #fff; font: 7px/11px "Liberation Sans", sans-serif; padding: 0 1px; }
.run { width: 17px; height: 17px; border: 1px solid #379a2a; border-radius: 50%; background: #4fdc30; color: #0b4c08; font: bold 6px/15px "Liberation Sans", sans-serif; text-align: center; }
.group .on { background: #bfdff5; }
.group .eye { grid-template: 12px 9px / 1fr; align-content: center; }
.eye svg { align-self: start; }
.eye span { font: bold 7px/9px "Liberation Sans", sans-serif; z-index: 1; }
.letter span { font: 9px/9px "Liberation Sans", sans-serif; padding-left: 8px; }

.workspace { flex: 1; min-height: 0; display: flex; background: #f0f0f0; }

.sidetabs { display: flex; flex-direction: column; width: 19px; padding-left: 3px; border-right: 1px solid #c4c4c4; box-shadow: inset 3px 0 #fff; overflow: hidden; font: 9px/15px Roboto, sans-serif; }
.sidetabs button { flex: none; writing-mode: vertical-rl; transform: rotate(180deg); width: 15px; padding: 7px 0; border-top: 1px solid #ddd; }
.sidetabs button:first-child { padding: 5px 0; }
.sidetabs .active { background: #fff; }

.dock { display: flex; flex-direction: column; width: 327px; }
.docktitle { display: flex; align-items: center; gap: 4px; height: 16px; padding: 0 3px; background: #d8d8d8; font: 9px/14px Roboto, sans-serif; }
.docktitle h2 { flex: 1; }
.docktitle svg { width: 8px; height: 8px; }
.filter { display: flex; align-items: center; height: 16px; font: 9px/14px Roboto, sans-serif; }
.filter > label:first-child { width: 52px; padding-left: 1px; white-space: nowrap; }
.pick { position: relative; width: 55px; }
.pick select { display: block; width: 100%; height: 14px; padding: 0 2px; border: 0; background: #e2e2e2; appearance: none; }
.pick svg { position: absolute; right: 3px; top: 4px; width: 5px; height: 5px; }
.filter > input { width: 129px; height: 14px; margin-left: 5px; border: 1px solid #c6c6c6; background: #fff; }
.sort { display: flex; align-items: center; gap: 4px; margin-left: auto; }
.sort input { appearance: none; width: 10px; height: 10px; border: 1px solid #333; background: #fff; }
.treetools { display: flex; gap: 4px; padding: 3px 0 5px; }
.treetools button { display: grid; place-items: center; width: 21px; height: 18px; background: #e2e2e2; border: 1px solid #d6d6d6; }
.treetools svg { width: 12px; height: 12px; }
.treebox { flex: 1; background: #fff; border: 1px solid #ccc; border-width: 1px 1px 0 0; }
table { width: 100%; border-collapse: collapse; table-layout: fixed; }
th, td { padding: 0; text-align: left; font-weight: 400; }
th { height: 21px; padding-left: 4px; }
th:first-child { padding-left: 3px; }
th + th { border-left: 1px solid #f0f0f0; }
.c-id { width: 142px; }
.c-name { width: 51px; }
td div { display: flex; align-items: center; height: 15px; padding-left: 73px; }
td .twist { margin: 0 16px 0 -24px; }
.twist svg { width: 8px; height: 8px; }
.master div { height: 24px; padding-left: 37px; }
.vis { display: grid; place-items: center; width: 22px; height: 18px; background: #e0e0e0; border: 1px solid #d2d2d2; }
.vis svg { width: 14px; height: 14px; }
.vis + span { padding-left: 24px; }

.viewtabs { display: flex; flex-direction: column; gap: 2px; width: 15px; padding-top: 1px; font: 9px/13px Roboto, sans-serif; }
.viewtabs button { position: relative; width: 15px; height: 120px; }
.viewtabs button + button { height: 62px; }
.viewtabs button svg { position: absolute; inset: 0; width: 100%; height: 100%; }
.viewtabs path { fill: #f0f0f0; stroke: #888; stroke-width: 1; }
.viewtabs .active path { fill: #fff; }
.viewtabs span { position: relative; display: block; margin: auto; writing-mode: vertical-rl; transform: rotate(180deg); white-space: nowrap; }

.canvas { flex: 1; min-width: 0; background: #000; overflow: hidden; }
.canvas > svg { width: 100%; height: 100%; }
.links { fill: none; stroke: #0b6610; stroke-width: 1; }
.labels { fill: #f2f2f2; font: 9px "Liberation Sans", sans-serif; text-anchor: middle; }
```
